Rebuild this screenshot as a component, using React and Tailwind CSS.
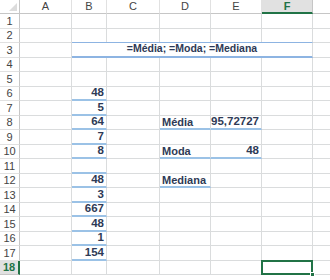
import React from 'react';

const cols = ['A', 'B', 'C', 'D', 'E', 'F', ''];
const grid = 'border-r border-b border-[#dadcdd]';
const blue = 'border-b-2 border-b-[#9bc2e6]';
const ink = 'text-[#2e3a56] font-bold';

const bValues = { 6: '48', 7: '5', 8: '64', 9: '7', 10: '8', 11: '', 12: '48', 13: '3', 14: '667', 15: '48', 16: '1', 17: '154' };
const labels = { 8: ['Média', '95,72727'], 10: ['Moda', '48'], 12: ['Mediana', null] };

const Cell = ({ className = '', children }) => (
  <div className={`${grid} flex items-center whitespace-nowrap px-[2px] ${className}`}>{children}</div>
);

export default function App() {
  const rows = [];
  for (let r = 1; r <= 18; r++) {
    const sel = r === 18;
    rows.push(
      <div
        key={`h${r}`}
        className={`flex items-center justify-center border-b border-r text-[11px] ${
          sel ? 'bg-[#e1e1e1] text-[#217346] font-bold border-r-2 border-r-[#217346] border-b-[#c6c6c6]' : 'bg-white text-[#444] border-[#c6c6c6] border-b-[#e1e1e1]'
        }`}
      >
        {r}
      </div>
    );
    if (r === 3) {
      rows.push(<Cell key="a3" />);
      rows.push(
        <div
          key="m3"
          className={`col-span-5 flex items-center justify-center border-t border-t-[#8db4e2] border-b-2 border-b-[#8db4e2] border-r border-r-[#dadcdd] -mt-px text-[10.5px] ${ink}`}
        >
          =Média; =Moda; =Mediana
        </div>
      );
      rows.push(<Cell key="g3" />);
      continue;
    }
    const b = bValues[r];
    const lab = labels[r];
    rows.push(<Cell key={`a${r}`} />);
    rows.push(
      <Cell key={`b${r}`} className={`justify-end text-[11.5px] ${ink} ${b !== undefined ? blue : ''}`}>
        {b}
      </Cell>
    );
    rows.push(<Cell key={`c${r}`} />);
    rows.push(
      <Cell key={`d${r}`} className={`text-[11px] ${ink} ${lab ? blue : ''}`}>
        {lab ? lab[0] : null}
      </Cell>
    );
    rows.push(
      <Cell key={`e${r}`} className={`justify-end text-[11.5px] ${ink} ${lab && lab[1] ? blue : ''}`}>
        {lab ? lab[1] : null}
      </Cell>
    );
    rows.push(
      sel ? (
        <div key="f18" className="relative border-2 border-[#217346] -mt-px -ml-px">
          <div className="absolute -right-[4px] -bottom-[4px] w-[5px] h-[5px] bg-[#217346] border border-white" />
        </div>
      ) : (
        <Cell key={`f${r}`} />
      )
    );
    rows.push(<Cell key={`g${r}`} />);
  }

  return (
    <div
      className="w-[330px] h-[280px] overflow-hidden bg-white"
      style={{ fontFamily: '"Liberation Sans", Arial, sans-serif' }}
    >
      <div className="grid grid-cols-[20px_52px_35px_53px_51px_51px_51px_40px] grid-rows-[14px_repeat(18,14.5px)]">
        <div className="relative bg-white border-r border-b border-[#c6c6c6]">
          <div className="absolute right-[2px] bottom-[2px] w-0 h-0 border-l-[8px] border-l-transparent border-b-[8px] border-b-[#dcdcdc]" />
        </div>
        {cols.map((c, i) => (
          <div
            key={i}
            className={`flex items-center justify-center border-r text-[11px] ${
              c === 'F'
                ? 'bg-[#e1e1e1] text-[#217346] font-bold border-b-2 border-b-[#217346] border-r-[#c6c6c6]'
                : 'bg-white text-[#444] border-b border-b-[#c6c6c6] border-r-[#e1e1e1]'
            }`}
          >
            {c}
          </div>
        ))}
        {rows}
      </div>
    </div>
  );
}
